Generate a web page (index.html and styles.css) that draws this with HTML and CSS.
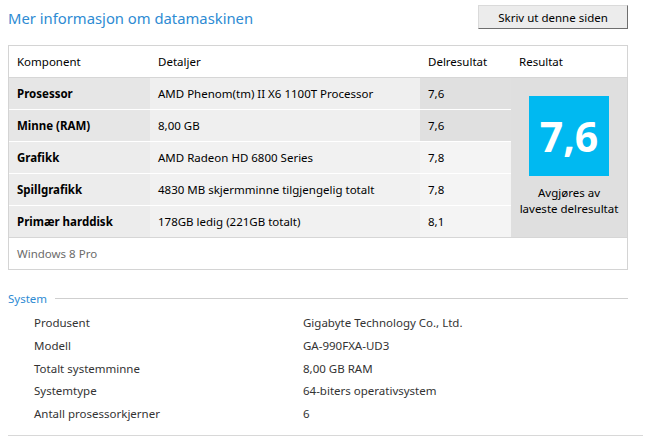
FILE: index.html
```html
<!DOCTYPE html>
<html lang="no">
<head>
  <meta charset="UTF-8">
  <meta name="viewport" content="width=device-width, initial-scale=1.0">
  <title>Mer informasjon om datamaskinen</title>
  <link rel="stylesheet" href="styles.css">
</head>
<body>
  <div class="page">
    <div class="header">
      <h1 class="title">Mer informasjon om datamaskinen</h1>
      <button class="print-btn">Skriv ut denne siden</button>
    </div>

    <div class="score-box">
      <table class="score-table">
        <thead>
          <tr>
            <th class="col-comp">Komponent</th>
            <th class="col-det">Detaljer</th>
            <th class="col-sub">Delresultat</th>
            <th class="col-res">Resultat</th>
          </tr>
        </thead>
        <tbody>
          <tr class="low">
            <td class="comp">Prosessor</td>
            <td class="det">AMD Phenom(tm) II X6 1100T Processor</td>
            <td class="sub">7,6</td>
            <td class="result" rowspan="5">
              <div class="badge">7,6</div>
              <div class="badge-note">Avgjøres av<br>laveste delresultat</div>
            </td>
          </tr>
          <tr class="low">
            <td class="comp">Minne (RAM)</td>
            <td class="det">8,00 GB</td>
            <td class="sub">7,6</td>
          </tr>
          <tr>
            <td class="comp">Grafikk</td>
            <td class="det">AMD Radeon HD 6800 Series</td>
            <td class="sub">7,8</td>
          </tr>
          <tr>
            <td class="comp">Spillgrafikk</td>
            <td class="det">4830 MB skjermminne tilgjengelig totalt</td>
            <td class="sub">7,8</td>
          </tr>
          <tr class="last">
            <td class="comp">Primær harddisk</td>
            <td class="det">178GB ledig (221GB totalt)</td>
            <td class="sub">8,1</td>
          </tr>
        </tbody>
      </table>
      <div class="os">Windows 8 Pro</div>
    </div>

    <div class="section">
      <div class="section-head">
        <span class="section-title">System</span>
        <span class="section-line"></span>
      </div>
      <div class="info-list">
        <div class="info-row"><span class="info-label">Produsent</span><span>Gigabyte Technology Co., Ltd.</span></div>
        <div class="info-row"><span class="info-label">Modell</span><span>GA-990FXA-UD3</span></div>
        <div class="info-row"><span class="info-label">Totalt systemminne</span><span>8,00 GB RAM</span></div>
        <div class="info-row"><span class="info-label">Systemtype</span><span>64-biters operativsystem</span></div>
        <div class="info-row"><span class="info-label">Antall prosessorkjerner</span><span>6</span></div>
      </div>
    </div>
    <div class="next-line"></div>
  </div>
</body>
</html>
```

FILE: styles.css
```css
body {
  margin: 0;
  background: #fff;
  font-family: "Noto Sans", "Open Sans", sans-serif;
  font-size: 11.5px;
  color: #000;
}
.page {
  width: 620px;
  padding-left: 8px;
}
.header {
  display: flex;
  justify-content: space-between;
  align-items: flex-start;
  height: 45px;
}
.title {
  margin: 8px 0 0;
  font-size: 14.8px;
  font-weight: normal;
  color: #2e8bd3;
}
.print-btn {
  margin-top: 5px;
  width: 150px;
  height: 24px;
  padding: 0;
  font-family: inherit;
  font-size: 11.5px;
  color: #000;
  background: #ececec;
  border: 1px solid #dadada;
  border-right-color: #6e6e6e;
  border-bottom-color: #6e6e6e;
}

/* tabell med delresultater */
.score-box {
  border: 1px solid #d4d4d4;
}
.score-table {
  width: 100%;
  border-collapse: separate;
  border-spacing: 0;
}
.score-table th {
  height: 31px;
  padding: 0 0 0 8px;
  text-align: left;
  font-weight: normal;
  border-bottom: 1px solid #d6d6d6;
}
.col-comp { width: 133px; }
.col-det { width: 262px; }
.col-sub { width: 83px; }
.score-table td {
  height: 31px;
  padding: 0 0 0 8px;
  border-bottom: 1px solid #fff;
}
.score-table .comp {
  font-weight: bold;
  background: #ececec;
}
.score-table .det { background: #f1f1f1; }
.score-table .sub { background: #f4f4f4; }
.score-table .low .comp { background: #e6e6e6; }
.score-table .low .det { background: #efefef; }
.score-table .low .sub { background: #e0e0e0; }
.score-table .last td { border-bottom-color: #d6d6d6; }
.score-table td.result {
  padding: 0;
  vertical-align: top;
  text-align: center;
  background: #dfdfdf;
  border-bottom: 1px solid #d6d6d6;
}
.badge {
  width: 80px;
  height: 80px;
  margin: 18px auto 0;
  background: #00b9f1;
  color: #fff;
  font-size: 41px;
  font-weight: bold;
  line-height: 80px;
}
.badge-note {
  margin-top: 9px;
  line-height: 16px;
}
.os {
  height: 31px;
  line-height: 31px;
  padding-left: 8px;
  color: #6b6b6b;
}

/* systeminfo */
.section {
  margin-top: 20px;
}
.section-head {
  display: flex;
  align-items: center;
  height: 16px;
}
.section-title {
  color: #2e8bd3;
}
.section-line {
  flex: 1;
  margin-left: 8px;
  border-top: 1px solid #cfcfcf;
}
.info-list {
  padding: 6px 0 0 26px;
}
.info-row {
  display: flex;
  height: 22.75px;
  line-height: 22.75px;
  color: #333;
}
.info-label {
  width: 269px;
}
.next-line {
  margin-top: 9px;
  width: 635px;
  border-top: 1px solid #d8d8d8;
}
```
